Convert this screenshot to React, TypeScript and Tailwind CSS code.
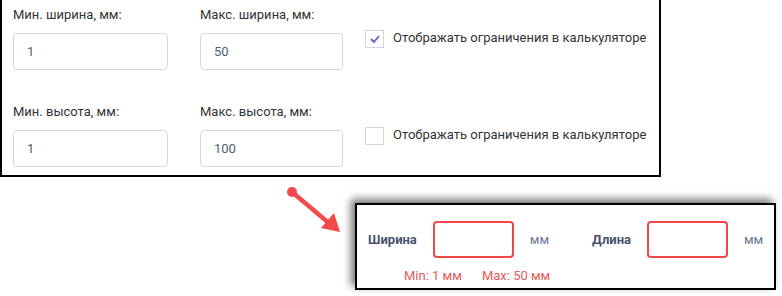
import React from 'react'

const font = { fontFamily: 'Roboto, "Noto Sans", sans-serif' }

const Field = ({ label, value, width }: { label: string; value: string; width: string }) => (
  <div className="flex flex-col">
    <label className="text-[13px] leading-[16px] text-[#333]">{label}</label>
    <div
      className={`${width} mt-[10px] h-[37px] rounded-[4px] border border-[#d3d7de] bg-white px-[13px] flex items-center text-[13px] text-[#4f5d6e]`}
    >
      {value}
    </div>
  </div>
)

const Check = ({ checked }: { checked?: boolean }) => (
  <div className="flex items-start gap-[9px] pt-[23px]">
    <div className="w-[19px] h-[18px] border border-[#d3d7de] bg-white flex items-center justify-center">
      {checked && (
        <svg width="10" height="8" viewBox="0 0 10 8">
          <path d="M1 4l3 3 5-6" fill="none" stroke="#5566c4" strokeWidth="1.8" />
        </svg>
      )}
    </div>
    <span className="text-[13px] leading-[16px] text-[#333]">Отображать ограничения в калькуляторе</span>
  </div>
)

const Row = ({ checked, min, max, label1, label2 }: { checked?: boolean; min: string; max: string; label1: string; label2: string }) => (
  <div className="flex">
    <Field label={label1} value={min} width="w-[155px]" />
    <div className="ml-[32px]">
      <Field label={label2} value={max} width="w-[143px]" />
    </div>
    <div className="ml-[22px]">
      <Check checked={checked} />
    </div>
  </div>
)

export default function App() {
  return (
    <div className="relative w-[782px] h-[296px] bg-white overflow-hidden" style={font}>
      <div className="w-[661px] h-[177px] border-x-2 border-b-2 border-black pl-[11px] pt-[7px] flex flex-col gap-[34px]">
        <Row checked label1="Мин. ширина, мм:" label2="Макс. ширина, мм:" min="1" max="50" />
        <Row label1="Мин. высота, мм:" label2="Макс. высота, мм:" min="1" max="100" />
      </div>

      <svg className="absolute left-[282px] top-[182px]" width="70" height="60" viewBox="0 0 70 60">
        <circle cx="10" cy="10" r="5" fill="#f24a4a" />
        <line x1="10" y1="10" x2="48" y2="42" stroke="#f24a4a" strokeWidth="4.5" />
        <polygon points="58,50 39,46 52,31" fill="#f24a4a" />
      </svg>

      <div className="ml-[355px] mt-[26px] w-[421px] h-[87px] border-2 border-black bg-white shadow-[-4px_-4px_8px_rgba(0,0,0,0.55)] pl-[11px] pt-[16px]">
        <div className="flex items-center h-[37px]">
          <span className="text-[13px] font-bold text-[#4a5270]">Ширина</span>
          <div className="ml-[16px] w-[81px] h-[37px] rounded-[4px] border-2 border-[#f04848]" />
          <span className="ml-[16px] text-[13px] text-[#66779a]">мм</span>
          <span className="ml-[43px] text-[13px] font-bold text-[#4a5270]">Длина</span>
          <div className="ml-[16px] w-[81px] h-[37px] rounded-[4px] border-2 border-[#f04848]" />
          <span className="ml-[16px] text-[13px] text-[#66779a]">мм</span>
        </div>
        <div className="ml-[36px] mt-[10px] flex gap-[20px] text-[13px] leading-[15px] text-[#e45a5a]">
          <span>Min: 1 мм</span>
          <span>Max: 50 мм</span>
        </div>
      </div>
    </div>
  )
}
